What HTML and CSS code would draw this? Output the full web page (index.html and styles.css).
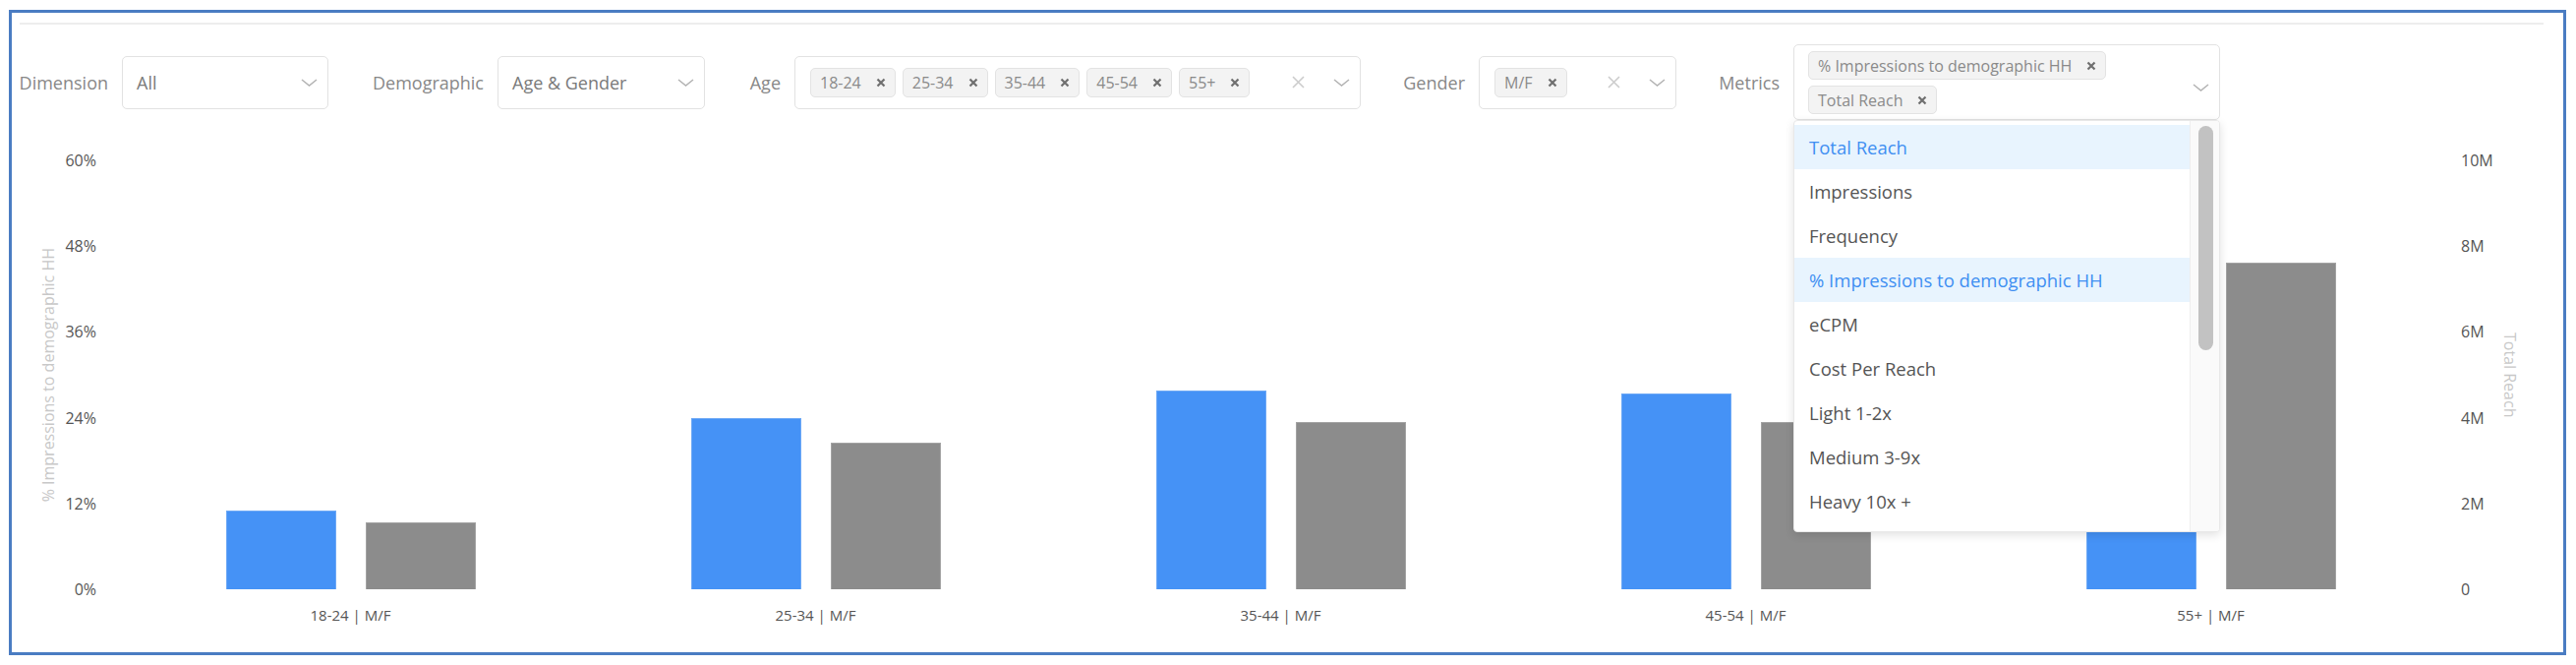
FILE: index.html
```html
<!DOCTYPE html>
<html lang="en">
<head>
<meta charset="utf-8">
<title>Demographic Report</title>
<link rel="stylesheet" href="styles.css">
</head>
<body>
<div class="frame">
  <div class="rule"></div>

  <div class="filters">
    <div class="field">
      <span class="label lbl-dimension">Dimension</span>
      <div class="select sel-dimension">
        <span class="value">All</span>
        <svg class="chev" viewBox="0 0 17 8"><polyline points="1,1 8.5,7 16,1"/></svg>
      </div>
    </div>
    <div class="field">
      <span class="label lbl-demographic">Demographic</span>
      <div class="select sel-demographic">
        <span class="value">Age &amp; Gender</span>
        <svg class="chev" viewBox="0 0 17 8"><polyline points="1,1 8.5,7 16,1"/></svg>
      </div>
    </div>
    <div class="field">
      <span class="label lbl-age">Age</span>
      <div class="select multi sel-age">
        <div class="tags">
          <span class="tag">18-24<svg class="tx" viewBox="0 0 10 10"><path d="M1.5 1.5L8.5 8.5M8.5 1.5L1.5 8.5"/></svg></span>
          <span class="tag">25-34<svg class="tx" viewBox="0 0 10 10"><path d="M1.5 1.5L8.5 8.5M8.5 1.5L1.5 8.5"/></svg></span>
          <span class="tag">35-44<svg class="tx" viewBox="0 0 10 10"><path d="M1.5 1.5L8.5 8.5M8.5 1.5L1.5 8.5"/></svg></span>
          <span class="tag">45-54<svg class="tx" viewBox="0 0 10 10"><path d="M1.5 1.5L8.5 8.5M8.5 1.5L1.5 8.5"/></svg></span>
          <span class="tag">55+<svg class="tx" viewBox="0 0 10 10"><path d="M1.5 1.5L8.5 8.5M8.5 1.5L1.5 8.5"/></svg></span>
        </div>
        <svg class="clear" viewBox="0 0 13 13"><path d="M1 1L12 12M12 1L1 12"/></svg>
        <svg class="chev" viewBox="0 0 17 8"><polyline points="1,1 8.5,7 16,1"/></svg>
      </div>
    </div>
    <div class="field">
      <span class="label lbl-gender">Gender</span>
      <div class="select multi sel-gender">
        <div class="tags">
          <span class="tag">M/F<svg class="tx" viewBox="0 0 10 10"><path d="M1.5 1.5L8.5 8.5M8.5 1.5L1.5 8.5"/></svg></span>
        </div>
        <svg class="clear" viewBox="0 0 13 13"><path d="M1 1L12 12M12 1L1 12"/></svg>
        <svg class="chev" viewBox="0 0 17 8"><polyline points="1,1 8.5,7 16,1"/></svg>
      </div>
    </div>
    <div class="field">
      <span class="label lbl-metrics">Metrics</span>
      <div class="select multi sel-metrics">
        <div class="tags">
          <span class="tag">% Impressions to demographic HH<svg class="tx" viewBox="0 0 10 10"><path d="M1.5 1.5L8.5 8.5M8.5 1.5L1.5 8.5"/></svg></span>
          <span class="tag">Total Reach<svg class="tx" viewBox="0 0 10 10"><path d="M1.5 1.5L8.5 8.5M8.5 1.5L1.5 8.5"/></svg></span>
        </div>
        <svg class="chev" viewBox="0 0 17 8"><polyline points="1,1 8.5,7 16,1"/></svg>

        <div class="menu">
          <ul class="options">
            <li class="opt selected">Total Reach</li>
            <li class="opt">Impressions</li>
            <li class="opt">Frequency</li>
            <li class="opt selected">% Impressions to demographic HH</li>
            <li class="opt">eCPM</li>
            <li class="opt">Cost Per Reach</li>
            <li class="opt">Light 1-2x</li>
            <li class="opt">Medium 3-9x</li>
            <li class="opt">Heavy 10x +</li>
          </ul>
          <div class="scrollbar"><div class="thumb"></div></div>
        </div>
      </div>
    </div>
  </div>

  <div class="chart">
    <div class="axis-title left"><span>% Impressions to demographic HH</span></div>
    <div class="ticks left">
      <span>60%</span><span>48%</span><span>36%</span><span>24%</span><span>12%</span><span>0%</span>
    </div>
    <div class="plot">
      <div class="bars">
        <div class="group">
          <div class="bar blue" style="height:80px"></div>
          <div class="bar grey" style="height:68px"></div>
        </div>
        <div class="group">
          <div class="bar blue" style="height:174px"></div>
          <div class="bar grey" style="height:149px"></div>
        </div>
        <div class="group">
          <div class="bar blue" style="height:202px"></div>
          <div class="bar grey" style="height:170px"></div>
        </div>
        <div class="group">
          <div class="bar blue" style="height:199px"></div>
          <div class="bar grey" style="height:170px"></div>
        </div>
        <div class="group">
          <div class="bar blue" style="height:190px"></div>
          <div class="bar grey" style="height:332px"></div>
        </div>
      </div>
      <div class="cats">
        <span>18-24 | M/F</span>
        <span>25-34 | M/F</span>
        <span>35-44 | M/F</span>
        <span>45-54 | M/F</span>
        <span>55+ | M/F</span>
      </div>
    </div>
    <div class="ticks right">
      <span>10M</span><span>8M</span><span>6M</span><span>4M</span><span>2M</span><span>0</span>
    </div>
    <div class="axis-title right"><span>Total Reach</span></div>
  </div>
</div>
</body>
</html>
```

FILE: styles.css
```css
* { box-sizing: border-box; }

html, body {
  margin: 0;
  padding: 0;
  background: #ffffff;
}

body {
  font-family: "Open Sans", "Liberation Sans", sans-serif;
  color: #555;
}

.frame {
  margin: 10px 10px 10px 9px;
  height: 656px;
  border: 3px solid #4a7cc2;
  padding-top: 10px;
}

.rule {
  height: 2px;
  background: #ededed;
  margin: 0 20px 0 8px;
}

/* ---------- filters ---------- */
.filters {
  display: flex;
  align-items: center;
  gap: 43px;
  margin-top: 20px;
  padding-left: 7px;
  height: 77px;
  position: relative;
  z-index: 2;
}

.field {
  display: flex;
  align-items: center;
  gap: 14px;
}

.label {
  font-size: 18px;
  color: #888;
  white-space: nowrap;
  text-align: right;
  flex-shrink: 0;
}

.lbl-dimension { width: 91px; }
.lbl-demographic { width: 115px; }
.lbl-age { width: 34px; }
.lbl-gender { width: 63px; }
.lbl-metrics { width: 62px; }

.select {
  position: relative;
  display: flex;
  align-items: center;
  height: 54px;
  border: 1px solid #e2e2e2;
  border-radius: 5px;
  background: #fff;
  padding: 0 10px 0 14px;
  flex-shrink: 0;
}

.sel-dimension { width: 210px; }
.sel-demographic { width: 211px; }
.sel-age { width: 576px; }
.sel-gender { width: 201px; }
.sel-metrics { width: 434px; height: 77px; align-items: flex-start; padding-top: 6px; }

.value {
  flex: 1;
  font-size: 18px;
  color: #7a7a7a;
  white-space: nowrap;
}

.chev {
  width: 17px;
  height: 8px;
  flex-shrink: 0;
  fill: none;
  stroke: #b2b2b2;
  stroke-width: 1.5;
  margin-left: auto;
}

.sel-metrics .chev { margin-top: 33px; }

.clear {
  width: 13px;
  height: 13px;
  flex-shrink: 0;
  fill: none;
  stroke: #cccccc;
  stroke-width: 1.6;
  margin-right: 29px;
}

.tags {
  flex: 1;
  display: flex;
  flex-wrap: wrap;
  gap: 6px 7px;
  padding-left: 1px;
}

.sel-metrics .tags { padding-left: 0; padding-right: 40px; }

.tag {
  display: inline-flex;
  align-items: center;
  height: 30px;
  padding: 0 9px;
  background: #f3f3f3;
  border: 1px solid #e3e3e3;
  border-radius: 5px;
  font-size: 16px;
  color: #8a8a8a;
  white-space: nowrap;
}

.sel-metrics .tag { height: 29px; }

.tx {
  width: 10px;
  height: 10px;
  margin-left: 15px;
  fill: none;
  stroke: #6f6f6f;
  stroke-width: 2.2;
}

/* ---------- dropdown ---------- */
.menu {
  position: absolute;
  top: calc(100% + 1px);
  left: -1px;
  width: 434px;
  height: 419px;
  background: #fff;
  border: 1px solid #e8e8e8;
  border-radius: 4px;
  box-shadow: 0 3px 10px rgba(0, 0, 0, 0.12);
  display: flex;
  overflow: hidden;
}

.options {
  list-style: none;
  margin: 0;
  padding: 4px 0 0 0;
  flex: 1;
}

.opt {
  height: 45px;
  display: flex;
  align-items: center;
  padding-left: 15px;
  font-size: 18.5px;
  color: #555;
  white-space: nowrap;
}

.opt.selected {
  background: #e8f4fe;
  color: #3f8ff2;
}

.scrollbar {
  width: 30px;
  background: #fafafa;
  border-left: 1px solid #eeeeee;
  padding: 5px 0 0 8px;
}

.thumb {
  width: 15px;
  height: 228px;
  background: #c2c2c2;
  border-radius: 8px;
}

/* ---------- chart ---------- */
.chart {
  display: flex;
  align-items: flex-start;
  margin-top: 30px;
  padding-left: 25px;
  position: relative;
  z-index: 1;
}

.axis-title {
  width: 24px;
  height: 436px;
  margin-top: 11px;
  display: flex;
  align-items: center;
  justify-content: center;
  font-size: 16px;
  color: #c8c8c8;
  white-space: nowrap;
}

.axis-title span {
  writing-mode: vertical-rl;
}

.axis-title.left span {
  transform: rotate(180deg);
}

.ticks {
  height: 458px;
  display: flex;
  flex-direction: column;
  justify-content: space-between;
  font-size: 16px;
  line-height: 22px;
  color: #555;
}

.ticks.left {
  width: 37px;
  text-align: right;
  align-items: flex-end;
}

.ticks.right {
  width: 38px;
  margin-left: 18px;
  align-items: flex-start;
}

.plot {
  width: 2365px;
  margin-left: 22px;
  margin-top: 11px;
}

.bars {
  height: 436px;
  display: flex;
}

.group {
  flex: 1;
  display: flex;
  justify-content: center;
  align-items: flex-end;
  gap: 30px;
}

.bar {
  width: 112px;
}

.bar.blue {
  background: #4592f6;
  border: 1px solid #6ea9f5;
  border-bottom: none;
}

.bar.grey {
  background: #8c8c8c;
  border: 1px solid #a3a3a3;
  border-bottom: none;
}

.cats {
  display: flex;
  margin-top: 16px;
}

.cats span {
  flex: 1;
  text-align: center;
  font-size: 15px;
  line-height: 20px;
  color: #555;
}
```
